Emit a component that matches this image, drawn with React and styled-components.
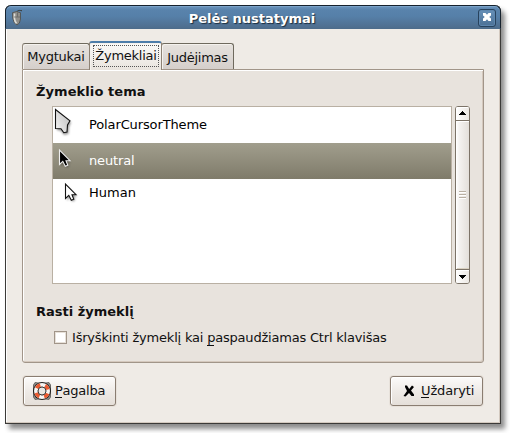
import React from "react";
import styled, { createGlobalStyle } from "styled-components";

const GlobalStyle = createGlobalStyle`
  *, *::before, *::after { box-sizing: border-box; }
  body {
    margin: 0;
    background: #fff;
    overflow: hidden;
    font-family: "DejaVu Sans", sans-serif;
    font-size: 13px;
    line-height: 16px;
    color: #111;
  }
`;

const Desktop = styled.div`
  width: 510px;
  height: 433px;
  padding: 5px;
`;

const Window = styled.main`
  width: 496px;
  height: 419px;
  display: flex;
  flex-direction: column;
  background: #efebe6;
  border: 1px solid #3b3a38;
  border-top: 0;
  border-radius: 6px 6px 0 0;
  box-shadow: 4px 5px 5px rgba(0, 0, 0, 0.45);
`;

const TitleBar = styled.header`
  flex: none;
  height: 24px;
  margin: 0 -1px;
  padding: 1px 4px 0 5px;
  display: grid;
  grid-template-columns: 18px 1fr 18px;
  align-items: center;
  border: 1px solid #16222e;
  border-bottom-color: #4d6c8b;
  border-radius: 6px 6px 0 0;
  background: linear-gradient(#6c95bd 0, #5983ac 4px, #5680a9 10px, #4e6d8d 100%);
  box-shadow: inset 0 1px #7ba3c9;
`;

const Title = styled.h1`
  margin: 0;
  padding: 2px 3px 0 0;
  text-align: center;
  font-size: 13px;
  line-height: 16px;
  color: #fff;
  text-shadow: 1px 1px 1px #1b2c3c;
`;

const CloseBox = styled.button`
  width: 18px;
  height: 18px;
  padding: 0 0 1px;
  display: grid;
  place-items: center;
  border: 1px solid #27425d;
  border-radius: 3px;
  background: linear-gradient(#6690b8, #4c7196);
  box-shadow: inset 0 0 0 1px #5d86ae;
`;

const Body = styled.div`
  flex: 1;
  display: flex;
  flex-direction: column;
  padding: 12px 16px 17px 16px;
  box-shadow: inset -1px -1px #d3c9bf, inset 1px 0 #fff;
`;

const Tabs = styled.nav`
  height: 28px;
  display: flex;
  align-items: flex-end;
`;

const Tab = styled.button`
  width: ${(p) => p.$width}px;
  height: 26px;
  padding: ${(p) => p.$drop || 1}px 0 0;
  font: inherit;
  letter-spacing: -0.25px;
  white-space: nowrap;
  color: #111;
  border: 1px solid #6f6a5e;
  border-left-color: #958b7f;
  border-bottom: 0;
  border-radius: 3px 3px 0 0;
  background: linear-gradient(#e6e2de, #d5cfcb);
  box-shadow: inset 1px 1px #f5f2ee;
`;

const ActiveTab = styled(Tab)`
  height: 29px;
  margin: 0 -1px -1px -1px;
  padding: 2px 2px 4px 3px;
  z-index: 1;
  border-color: #8d8275;
  border-top: 2px solid #4d7da9;
  background: linear-gradient(#fbfaf8, #e9e4de);
`;

const FocusRing = styled.span`
  display: block;
  height: 22px;
  padding-top: 2px;
  border: 1px dotted #555;
`;

const Panel = styled.section`
  height: 294px;
  padding: 14px 13px 0 13px;
  border: 1px solid #a19589;
  border-radius: 0 0 3px 3px;
  background: #e8e3dd;
  box-shadow: inset 1px 1px #fff, inset -1px -1px #d5c9be;
`;

const Heading = styled.h2`
  margin: 0;
  font-size: 13px;
  line-height: 16px;
  letter-spacing: ${(p) => p.$spacing || 0};
`;

const ListArea = styled.div`
  height: 178px;
  margin: 6px 0 20px 16px;
  display: flex;
  gap: 3px;
`;

const List = styled.div`
  flex: none;
  width: 400px;
  border: 1px solid #b9b0a3;
  background: #fff;
`;

const Row = styled.div`
  height: ${(p) => p.$height}px;
  display: grid;
  grid-template-columns: 36px 1fr;
  align-items: center;
  letter-spacing: ${(p) => p.$spacing || 0};
  color: ${(p) => (p.$selected ? "#fff" : "#000")};
  background: ${(p) => (p.$selected ? "linear-gradient(#a19e8d, #7f7b6a)" : "#fff")};

  svg { display: block; overflow: visible; align-self: start; }
`;

const Scrollbar = styled.div`
  flex: none;
  width: 15px;
  display: flex;
  flex-direction: column;
  border: 1px solid #7c7367;
  border-radius: 3px;
  overflow: hidden;
  background: #f5f3f0;
`;

const Arrow = styled.div`
  height: 13px;
  display: grid;
  place-items: center;
  background: linear-gradient(90deg, #fff, #ece8e3);
  box-shadow: inset 1px 1px #fff;
  padding-bottom: ${(p) => (p.$up ? 2 : 0)}px;
`;

const Thumb = styled.div`
  flex: 1;
  display: flex;
  flex-direction: column;
  align-items: center;
  justify-content: center;
  gap: 1px;
  border-top: 1px solid #7c7367;
  border-bottom: 1px solid #7c7367;
  background: linear-gradient(90deg, #fff, #f4f2f0 25%, #e3dfda);
  box-shadow: inset 1px 1px #fff, inset 0 -1px #d8d0c0;
`;

const Grip = styled.i`
  width: 7px;
  height: 2px;
  border-top: 1px solid #b9b0a3;
  background: #fff;
`;

const CheckRow = styled.label`
  display: flex;
  align-items: center;
  gap: 5px;
  margin: 10px 0 0 18px;
  white-space: nowrap;
  letter-spacing: -0.2px;
`;

const CheckBox = styled.input`
  appearance: none;
  width: 13px;
  height: 13px;
  margin: 0 0 2px;
  border: 1px solid #a19589;
  background: #fff;
  box-shadow: inset 0 0 0 1px #e7e1d9;
`;

const Actions = styled.footer`
  margin-top: 13px;
  display: flex;
  justify-content: space-between;
  padding: 0 1px;
`;

const Button = styled.button`
  width: 93px;
  height: 30px;
  padding: 0 0 0 ${(p) => p.$inset}px;
  display: flex;
  align-items: center;
  gap: ${(p) => p.$gap}px;
  font: inherit;
  white-space: nowrap;
  color: #111;
  border: 1px solid #8a7d71;
  border-radius: 3px;
  background: linear-gradient(#fcfbfa, #efebe7 50%, #e5dfd9);
  box-shadow: inset 1px 1px #fff, 0 0 0 1px #e7e1da;
  letter-spacing: ${(p) => p.$spacing || 0};
`;

const Key = styled.span`
  display: inline-block;
  height: 16px;
  background: linear-gradient(#111, #111) 0 ${(p) => (p.$low ? 15 : 14)}px / calc(100% - 1px) 1px no-repeat;
`;

function MouseIcon() {
  return (
    <svg width="12" height="18" viewBox="0 0 12 18">
      <path d="M6 4C5.5 2 7 .8 11 1.8" fill="none" stroke="#343634" />
      <path d="M1.5 3.7Q5.5 1.5 9.5 3.7V10Q9 15 6 16Q2.5 14.5 1.7 9Z" fill="#918f8a" stroke="#4b4b47" strokeWidth=".8" />
      <path d="M3.5 4.5V10Q4 13 5.5 14.3" fill="none" stroke="#deded9" strokeWidth="1.6" />
      <path d="M6.5 3.7V7.7M3 8H9" stroke="#5f605d" strokeWidth=".7" />
    </svg>
  );
}

function PolarCursor() {
  return (
    <svg width="22" height="30" viewBox="0 0 22 30">
      <defs>
        <linearGradient id="ice" x1="0" y1="1" x2="1" y2="0.3">
          <stop stopColor="#fff" />
          <stop offset=".3" stopColor="#e6e6e6" />
          <stop offset="1" stopColor="#c2c2c2" />
        </linearGradient>
        <filter id="soft" x="-50%" y="-50%" width="200%" height="200%"><feGaussianBlur stdDeviation="1.2" /></filter>
      </defs>
      <path d="M4 5L18 15.5L16 20L15.5 27L11 28L8 24L4 23Z" fill="#555" opacity=".6" filter="url(#soft)" />
      <path d="M2.5 2.5L17 13.8L14.5 18L14 25L10.8 25.7L8 21.7L2.5 21.5Z" fill="url(#ice)" stroke="#111" strokeWidth="1.1" />
    </svg>
  );
}

function PointerIcon({ x, y, dark }) {
  return (
    <svg width="34" height="27" viewBox="0 0 34 27">
      <g transform={`translate(${x} ${y})`}>
        <path d="M2 3V17L5 14L7 18L10 17L9 13H12Z" fill="#333" opacity=".5" filter="url(#soft)" />
        <path
          d="M.5 .5V15L3.8 11.8L6.3 16.8L8.8 15.8L7 11.2H11Z"
          fill={dark ? "#000" : "#fff"}
          stroke={dark ? "#eee" : "#111"}
          strokeWidth="1.1"
        />
      </g>
    </svg>
  );
}

function HelpIcon() {
  return (
    <svg width="20" height="20" viewBox="0 0 20 20">
      <path d="M3 1.5L6 2H14L17 1.5L18.5 4V16L17 18.5L14 18H6L3 18.5L1.5 16V4Z" fill="#8f8d8a" stroke="#6b6965" />
      <circle cx="10" cy="10" r="9" fill="#1f1e1d" />
      <circle cx="10" cy="10" r="6.1" fill="none" stroke="#f7f6f4" strokeWidth="3.8" />
      <circle cx="10" cy="10" r="6.1" fill="none" stroke="#ea5a30" strokeWidth="3.8" strokeDasharray="4.6 4.98" strokeDashoffset="-2.5" />
      <circle cx="10" cy="10" r="4" fill="#e9e6e2" stroke="#3f3c39" strokeWidth="1" />
    </svg>
  );
}

function StopIcon() {
  return (
    <svg width="12" height="12" viewBox="0 0 12 12">
      <path d="M2 .5H4L6.2 4L9 .5L11 2L8 5.5L11 9.5V11H8.5L6 8L2.5 11.5L.5 11L4 6L2 2Z" fill="#000" />
    </svg>
  );
}

export default function App() {
  return (
    <>
      <GlobalStyle />
      <Desktop>
        <Window>
          <TitleBar>
            <MouseIcon />
            <Title>Pelės nustatymai</Title>
            <CloseBox aria-label="Uždaryti">
              <svg width="8" height="8" viewBox="0 0 8 8">
                <path d="M0 0H2.5L4 1.8L5.5 0H8V2.5L6.2 4L8 5.5V8H5.5L4 6.2L2.5 8H0V5.5L1.8 4L0 2.5Z" fill="#fff" />
              </svg>
            </CloseBox>
          </TitleBar>
          <Body>
            <Tabs>
              <Tab $width={68}>Mygtukai</Tab>
              <ActiveTab $width={73}><FocusRing>Žymekliai</FocusRing></ActiveTab>
              <Tab $width={73} $drop={3}>Judėjimas</Tab>
            </Tabs>
            <Panel>
              <Heading $spacing="0.08px">Žymeklio tema</Heading>
              <ListArea>
                <List>
                  <Row $height={36} $spacing="-0.12px"><PolarCursor /><span>PolarCursorTheme</span></Row>
                  <Row $height={36} $spacing="-0.15px" $selected><PointerIcon x={6} y={6.5} dark /><span>neutral</span></Row>
                  <Row $height={27}><PointerIcon x={12} y={4.5} /><span>Human</span></Row>
                </List>
                <Scrollbar>
                  <Arrow $up><svg width="7" height="4" viewBox="0 0 7 4" shapeRendering="crispEdges"><path d="M3 0h1v1h1v1h1v1h1v1H0V3h1V2h1V1h1z" /></svg></Arrow>
                  <Thumb><Grip /><Grip /><Grip /></Thumb>
                  <Arrow><svg width="7" height="4" viewBox="0 0 7 4" shapeRendering="crispEdges"><path d="M0 0h7v1H6v1H5v1H4v1H3V3H2V2H1V1H0z" /></svg></Arrow>
                </Scrollbar>
              </ListArea>
              <Heading>Rasti žymeklį</Heading>
              <CheckRow>
                <CheckBox type="checkbox" />
                <span>Išryškinti žymeklį kai <Key $low>p</Key>aspaudžiamas Ctrl klavišas</span>
              </CheckRow>
            </Panel>
            <Actions>
              <Button $inset={8} $gap={3} $spacing="-0.25px"><HelpIcon /><span><Key>P</Key>agalba</span></Button>
              <Button $inset={12} $gap={6} $spacing="-0.15px"><StopIcon /><span><Key>U</Key>ždaryti</span></Button>
            </Actions>
          </Body>
        </Window>
      </Desktop>
    </>
  );
}
